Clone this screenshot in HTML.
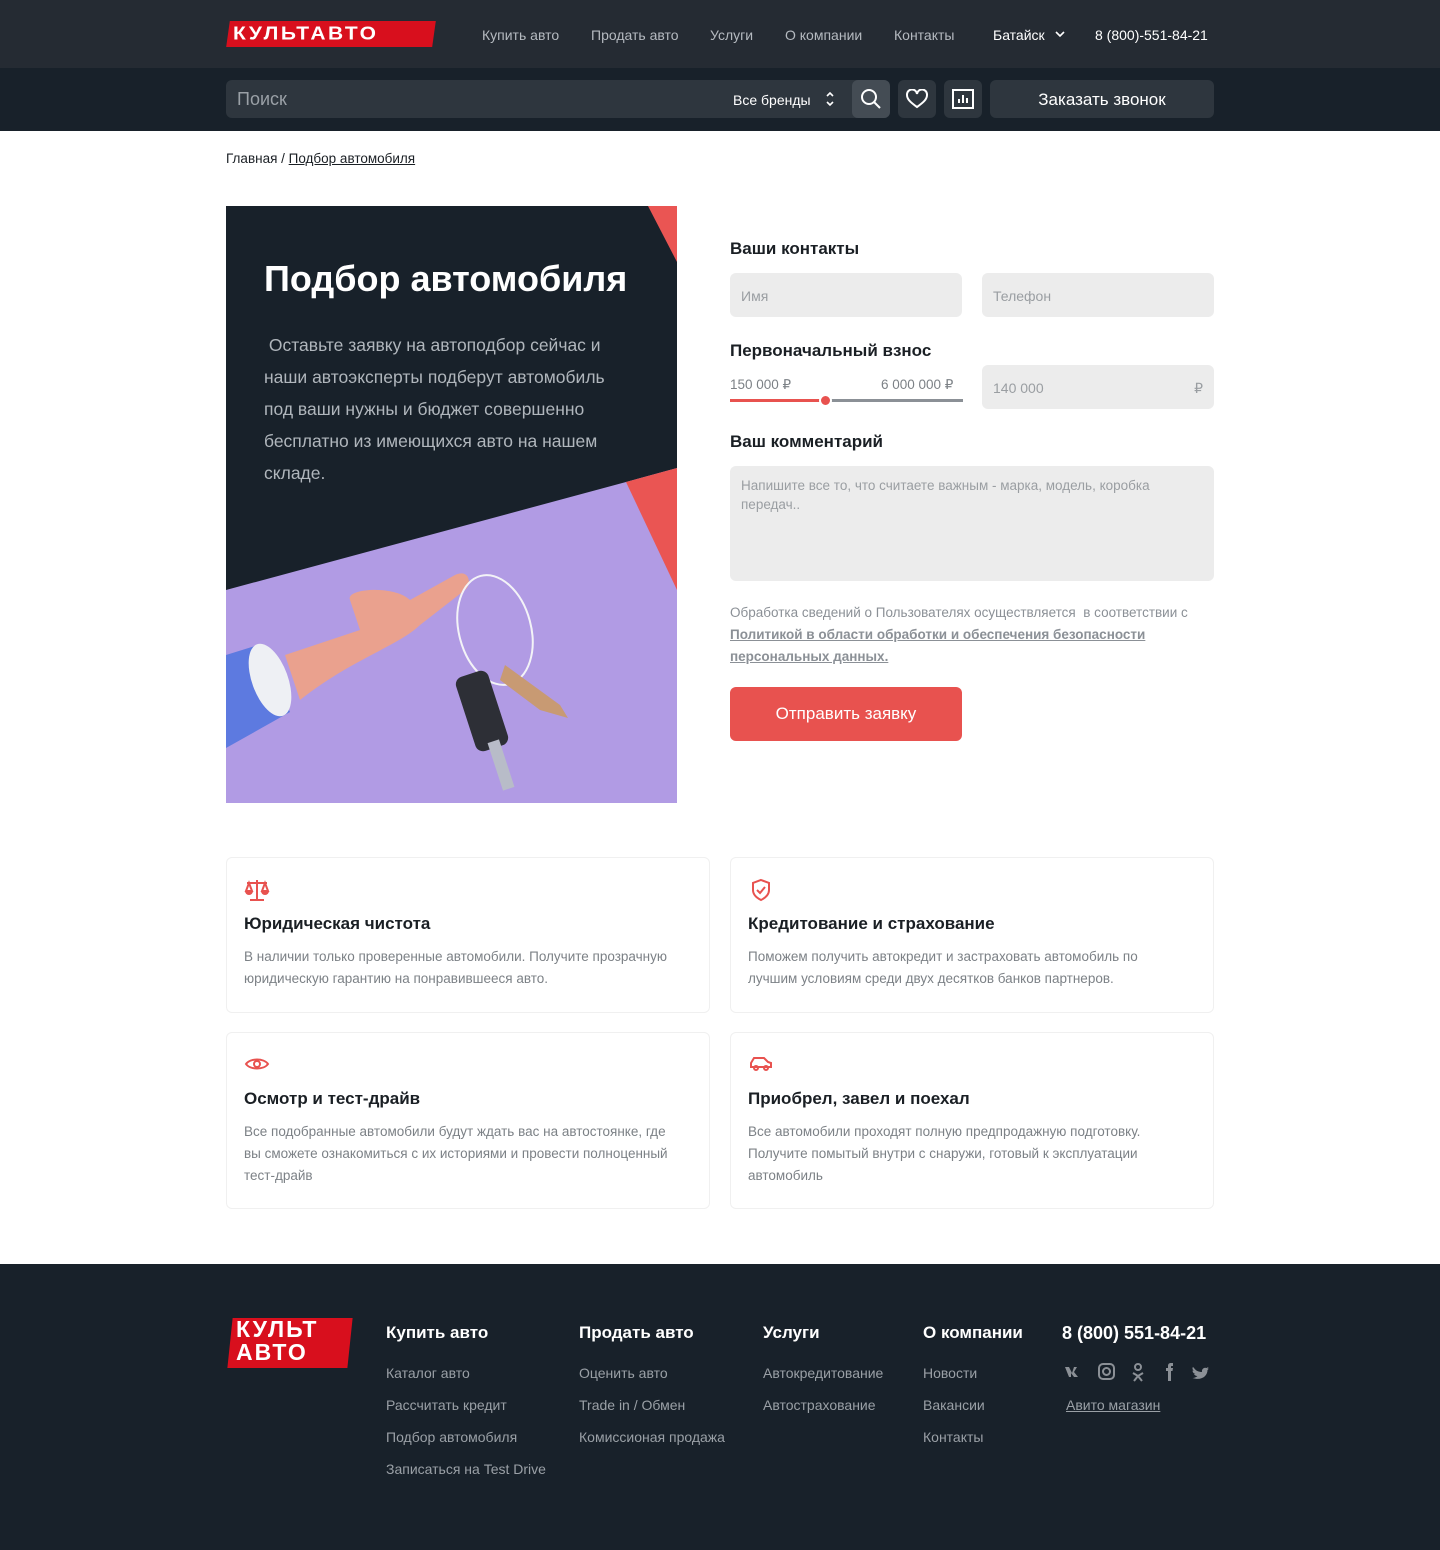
<!DOCTYPE html>
<html><head><meta charset="utf-8"><style>
*{box-sizing:border-box;margin:0;padding:0}
body{width:1440px;height:1550px;background:#fff;font-family:"Liberation Sans",sans-serif;color:#1a1f24;position:relative;overflow:hidden}
.a{position:absolute}
.top{left:0;top:0;width:1440px;height:68px;background:#252b33}
.nav{top:27px;font-size:14px;color:#b5bac0}
.bar{left:0;top:68px;width:1440px;height:63px;background:#18212a}
.inp{background:#2e363e;border-radius:6px}
.lbl{font-size:17px;font-weight:bold;color:#1a1f24}
.field{background:#ececec;border-radius:6px;font-size:14px;color:#9a9ea2;padding:15px 11px}
.card{border:1px solid #f0f0f0;border-radius:6px}
.card h3{position:absolute;left:17px;top:56px;font-size:17px;font-weight:bold}
.card p{position:absolute;left:17px;top:88px;font-size:13.5px;line-height:22px;color:#7c8186;width:440px}
.foot{left:0;top:1264px;width:1440px;height:286px;background:#18212a}
.fh{top:1323px;font-size:17px;font-weight:bold;color:#fff}
.fl{font-size:14px;color:#9aa0a6;line-height:32px}
</style></head><body>
<div class="a top"></div>
<div class="a" style="left:228px;top:21px;width:206px;height:26px;background:#d80f1d;transform:skewX(-8deg)"></div>
<div class="a" style="left:233px;top:22px;font-size:21px;font-weight:900;color:#fff;letter-spacing:2.5px;line-height:24px;transform:scaleY(0.9)">КУЛЬТАВТО</div>
<div class="a nav" style="left:482px">Купить авто</div>
<div class="a nav" style="left:591px">Продать авто</div>
<div class="a nav" style="left:710px">Услуги</div>
<div class="a nav" style="left:785px">О компании</div>
<div class="a nav" style="left:894px">Контакты</div>
<div class="a nav" style="left:993px;color:#fff">Батайск</div>
<svg class="a" style="left:1054px;top:29px" width="12" height="10" viewBox="0 0 12 10" fill="none" stroke="#fff" stroke-width="1.6"><path d="M2 3l4 4 4-4"/></svg>
<div class="a nav" style="left:1095px;color:#fff">8 (800)-551-84-21</div>
<div class="a bar"></div>
<div class="a inp" style="left:226px;top:80px;width:664px;height:38px"></div>
<div class="a" style="left:237px;top:89px;font-size:18px;color:#9aa0a6">Поиск</div>
<div class="a" style="left:733px;top:92px;font-size:14px;color:#fff">Все бренды</div>
<svg class="a" style="left:824px;top:90px" width="12" height="18" viewBox="0 0 12 18" fill="none" stroke="#fff" stroke-width="1.6"><path d="M3 6l3-3 3 3M3 12l3 3 3-3"/></svg>
<div class="a" style="left:852px;top:80px;width:38px;height:38px;background:#444c54;border-radius:6px"></div>
<svg class="a" style="left:860px;top:88px" width="22" height="22" viewBox="0 0 22 22" fill="none" stroke="#fff" stroke-width="2"><circle cx="9" cy="9" r="7"/><path d="M14 14l6 6"/></svg>
<div class="a inp" style="left:898px;top:80px;width:38px;height:38px"></div>
<svg class="a" style="left:906px;top:89px" width="22" height="20" viewBox="0 0 22 20" fill="none" stroke="#fff" stroke-width="2"><path d="M11 18C4 13 1 10 1 6a5 5 0 0110-1 5 5 0 0110 1c0 4-3 7-10 12z"/></svg>
<div class="a inp" style="left:944px;top:80px;width:38px;height:38px"></div>
<svg class="a" style="left:952px;top:88px" width="22" height="22" viewBox="0 0 22 22" fill="none" stroke="#fff" stroke-width="2"><rect x="1" y="2" width="20" height="18"/><path d="M7 15V11M11 15V7M15 15V10"/></svg>
<div class="a inp" style="left:990px;top:80px;width:224px;height:38px"></div>
<div class="a" style="left:990px;top:90px;width:224px;text-align:center;font-size:17px;color:#fff">Заказать звонок</div>

<div class="a" style="left:226px;top:151px;font-size:13.5px">Главная / <u>Подбор автомобиля</u></div>

<svg class="a" style="left:226px;top:206px" width="451" height="597" viewBox="226 206 451 597">
<rect x="226" y="206" width="451" height="597" fill="#18212a"/>
<polygon points="648,206 677,206 677,262" fill="#ea5553"/>
<polygon points="226,590 626,482 677,468 677,803 226,803" fill="#b19be4"/>
<polygon points="626,482 677,468 677,590" fill="#ea5553"/>
<polygon points="226,655 258,645 290,712 226,748" fill="#5d7ae0"/>
<ellipse cx="270" cy="680" rx="18" ry="38" fill="#eef0f4" transform="rotate(-20 270 680)"/>
<path d="M285 655 L360 630 L350 600 C345 588 395 585 410 600 L455 575 C470 568 472 585 465 590 L420 625 C400 645 350 660 300 700 Z" fill="#eaa18e"/>
<ellipse cx="495" cy="630" rx="36" ry="56" fill="none" stroke="#f3f3f7" stroke-width="2" transform="rotate(-15 495 630)"/>
<path d="M505 665 L560 705 L568 718 L540 710 L500 680 Z" fill="#c89a73"/>
<rect x="465" y="672" width="34" height="78" rx="8" fill="#2d2f36" transform="rotate(-18 482 711)"/>
<rect x="495" y="740" width="12" height="50" fill="#b8bcc8" transform="rotate(-18 501 765)"/>
</svg>
<div class="a" style="left:264px;top:258px;font-size:36px;font-weight:bold;color:#fff">Подбор автомобиля</div>
<div class="a" style="left:264px;top:329px;width:370px;font-size:17.5px;line-height:32px;color:#b0b6bc">&nbsp;Оставьте заявку на автоподбор сейчас и наши автоэксперты подберут автомобиль под ваши нужны и бюджет совершенно бесплатно из имеющихся авто на нашем складе.</div>

<div class="a lbl" style="left:730px;top:239px">Ваши контакты</div>
<div class="a field" style="left:730px;top:273px;width:232px;height:44px">Имя</div>
<div class="a field" style="left:982px;top:273px;width:232px;height:44px">Телефон</div>
<div class="a lbl" style="left:730px;top:341px">Первоначальный взнос</div>
<div class="a" style="left:730px;top:377px;font-size:13.5px;color:#7c8186">150 000 ₽</div>
<div class="a" style="left:881px;top:377px;font-size:13.5px;color:#7c8186">6 000 000 ₽</div>
<div class="a" style="left:730px;top:399px;width:96px;height:3px;background:#e8524f"></div>
<div class="a" style="left:826px;top:399px;width:137px;height:3px;background:#8b9096"></div>
<div class="a" style="left:819px;top:394px;width:13px;height:13px;border-radius:50%;background:#e8524f;border:2px solid #fff"></div>
<div class="a field" style="left:982px;top:365px;width:232px;height:44px">140 000<span style="float:right">₽</span></div>
<div class="a lbl" style="left:730px;top:432px">Ваш комментарий</div>
<div class="a field" style="left:730px;top:466px;width:484px;height:115px;padding:10px 11px;line-height:19px;font-size:13.5px">Напишите все то, что считаете важным - марка, модель, коробка передач..</div>
<div class="a" style="left:730px;top:602px;width:484px;font-size:13.5px;line-height:22px;color:#8b9096">Обработка сведений о Пользователях осуществляется &nbsp;в соответствии с <b><u>Политикой в области обработки и обеспечения безопасности персональных данных.</u></b></div>
<div class="a" style="left:730px;top:687px;width:232px;height:54px;background:#e8524f;border-radius:6px;color:#fff;font-size:17px;text-align:center;line-height:54px">Отправить заявку</div>

<div class="a card" style="left:226px;top:857px;width:484px;height:156px">
<svg class="a" style="left:17px;top:20px" width="26" height="24" viewBox="0 0 26 24" fill="none" stroke="#e8524f" stroke-width="2"><path d="M13 2v20M6 22h14M3 5h20M5 5l-3 8h6zM21 5l-3 8h6z"/><path d="M2 13a3 3 0 006 0M18 13a3 3 0 006 0" fill="#e8524f"/></svg>
<h3>Юридическая чистота</h3><p>В наличии только проверенные автомобили. Получите прозрачную юридическую гарантию на понравившееся авто.</p></div>
<div class="a card" style="left:730px;top:857px;width:484px;height:156px">
<svg class="a" style="left:20px;top:20px" width="20" height="24" viewBox="0 0 20 24" fill="none" stroke="#e8524f" stroke-width="2"><path d="M10 2l8 3v7c0 5-4 8-8 10-4-2-8-5-8-10V5z"/><path d="M6 12l3 3 5-6"/></svg>
<h3>Кредитование и страхование</h3><p>Поможем получить автокредит и застраховать автомобиль по лучшим условиям среди двух десятков банков партнеров.</p></div>
<div class="a card" style="left:226px;top:1032px;width:484px;height:177px">
<svg class="a" style="left:17px;top:22px" width="26" height="18" viewBox="0 0 26 18" fill="none" stroke="#e8524f" stroke-width="2"><path d="M2 9C6 3 20 3 24 9 20 15 6 15 2 9z"/><circle cx="13" cy="9" r="3"/></svg>
<h3>Осмотр и тест-драйв</h3><p>Все подобранные автомобили будут ждать вас на автостоянке, где вы сможете ознакомиться с их историями и провести полноценный тест-драйв</p></div>
<div class="a card" style="left:730px;top:1032px;width:484px;height:177px">
<svg class="a" style="left:17px;top:22px" width="26" height="18" viewBox="0 0 26 18" fill="none" stroke="#e8524f" stroke-width="2"><path d="M3 12V8l3-5h10l4 4 3 1v4z"/><circle cx="8" cy="13" r="2"/><circle cx="18" cy="13" r="2"/></svg>
<h3>Приобрел, завел и поехал</h3><p>Все автомобили проходят полную предпродажную подготовку. Получите помытый внутри с снаружи, готовый к эксплуатации автомобиль</p></div>

<div class="a foot"></div>
<div class="a" style="left:230px;top:1318px;width:120px;height:50px;background:#d80f1d;transform:skewX(-6deg)"></div>
<div class="a" style="left:236px;top:1318px;font-size:23px;font-weight:900;color:#fff;line-height:23px;letter-spacing:2px">КУЛЬТ<br>АВТО</div>
<div class="a fh" style="left:386px">Купить авто</div>
<div class="a fh" style="left:579px">Продать авто</div>
<div class="a fh" style="left:763px">Услуги</div>
<div class="a fh" style="left:923px">О компании</div>
<div class="a fh" style="left:1062px;font-size:18px">8 (800) 551-84-21</div>
<div class="a fl" style="left:386px;top:1357px">Каталог авто<br>Рассчитать кредит<br>Подбор автомобиля<br>Записаться на Test Drive</div>
<div class="a fl" style="left:579px;top:1357px">Оценить авто<br>Trade in / Обмен<br>Комиссионая продажа</div>
<div class="a fl" style="left:763px;top:1357px">Автокредитование<br>Автострахование</div>
<div class="a fl" style="left:923px;top:1357px">Новости<br>Вакансии<br>Контакты</div>
<div class="a fl" style="left:1066px;top:1389px"><u>Авито магазин</u></div>
<svg class="a" style="left:1064px;top:1362px" width="150" height="20" viewBox="0 0 150 20" fill="#8b9096">
<path d="M1 5h4l3 6 2-6h3l-3 5 4 5h-4l-3-4v4H5z"/>
<rect x="35" y="2" width="15" height="15" rx="4" fill="none" stroke="#8b9096" stroke-width="2"/><circle cx="42.5" cy="9.5" r="3.5" fill="none" stroke="#8b9096" stroke-width="2"/>
<circle cx="74" cy="5" r="3" fill="none" stroke="#8b9096" stroke-width="2"/><path d="M69 11l5 3 5-3M74 14l-4 5M74 14l4 5" fill="none" stroke="#8b9096" stroke-width="2"/>
<path d="M104 19V9h-2V6h2V4c0-2 1-3 3-3h2v3h-1.5c-.5 0-.5.5-.5 1v1h2l-.5 3H107v10z"/>
<path d="M130 6c2 3 5 4 8 4-.5-3 2-5 4.5-4l2-1-1 2 1.5-.5-1.5 1.5c0 6-6 11-15 8 2 0 4-1 5-2-2 0-3-1-3.5-2h1.5c-2-.5-3-2-3-3.5l1.5.5c-1.5-1-2-3-1-4z"/>
</svg>
</body></html>
